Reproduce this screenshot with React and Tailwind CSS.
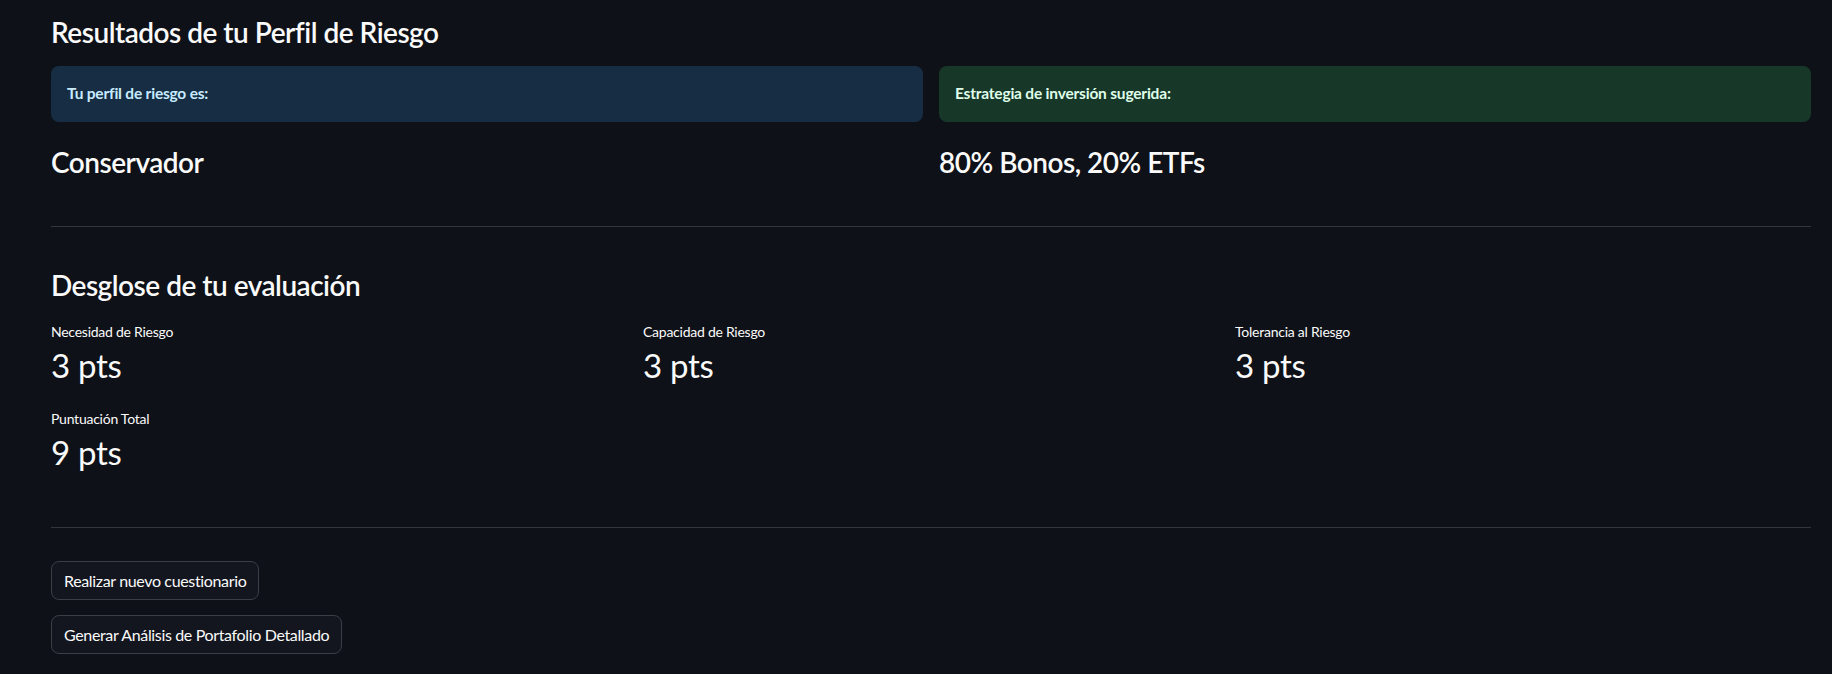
const metrics = [
  { label: 'Necesidad de Riesgo', value: '3 pts' },
  { label: 'Capacidad de Riesgo', value: '3 pts' },
  { label: 'Tolerancia al Riesgo', value: '3 pts' },
];

const Metric = ({ label, value }) => (
  <div>
    <div className="text-[14px] leading-[20px] tracking-[-0.25px] text-[#fafafa]">{label}</div>
    <div className="text-[33px] leading-[44px] tracking-[-0.3px] text-[#fafafa] mt-[1px]">{value}</div>
  </div>
);

const Button = ({ children }) => (
  <button className="h-[39px] px-[12px] rounded-[8px] border border-[#3b3e46] bg-[#13161e] text-[16px] tracking-[-0.35px] text-[#fafafa] self-start">
    {children}
  </button>
);

export default function App() {
  return (
    <div className="min-h-screen bg-[#0e1117] text-[#fafafa] pl-[51px] pr-[21px] pb-4" style={{ fontFamily: 'Lato, "Noto Sans", sans-serif' }}>
      <h3 className="text-[28px] font-semibold leading-[34px] tracking-[-0.5px] pt-[15px]">Resultados de tu Perfil de Riesgo</h3>

      <div className="grid grid-cols-2 gap-4 mt-[17px]">
        <div>
          <div className="h-[56px] rounded-[8px] bg-[#172d43] text-[#c7ebff] text-[15.5px] font-bold tracking-[-0.2px] flex items-center px-4">
            Tu perfil de riesgo es:
          </div>
          <div className="text-[28px] font-semibold leading-[34px] tracking-[-0.5px] mt-[23px]">Conservador</div>
        </div>
        <div>
          <div className="h-[56px] rounded-[8px] bg-[#173828] text-[#dffde9] text-[15.5px] font-bold tracking-[-0.2px] flex items-center px-4">
            Estrategia de inversión sugerida:
          </div>
          <div className="text-[28px] font-semibold leading-[34px] tracking-[-0.5px] mt-[23px]">80% Bonos, 20% ETFs</div>
        </div>
      </div>

      <hr className="border-0 h-px bg-[#34363d] mt-[47px]" />

      <h3 className="text-[28px] font-semibold leading-[34px] tracking-[-0.5px] mt-[41px]">Desglose de tu evaluación</h3>

      <div className="grid grid-cols-3 gap-4 mt-[20px]">
        {metrics.map((m) => (
          <Metric key={m.label} label={m.label} value={m.value} />
        ))}
      </div>
      <div className="mt-[22px]">
        <Metric label="Puntuación Total" value="9 pts" />
      </div>

      <hr className="border-0 h-px bg-[#34363d] mt-[53px]" />

      <div className="flex flex-col gap-[15px] mt-[33px]">
        <Button>Realizar nuevo cuestionario</Button>
        <Button>Generar Análisis de Portafolio Detallado</Button>
      </div>
    </div>
  );
}
